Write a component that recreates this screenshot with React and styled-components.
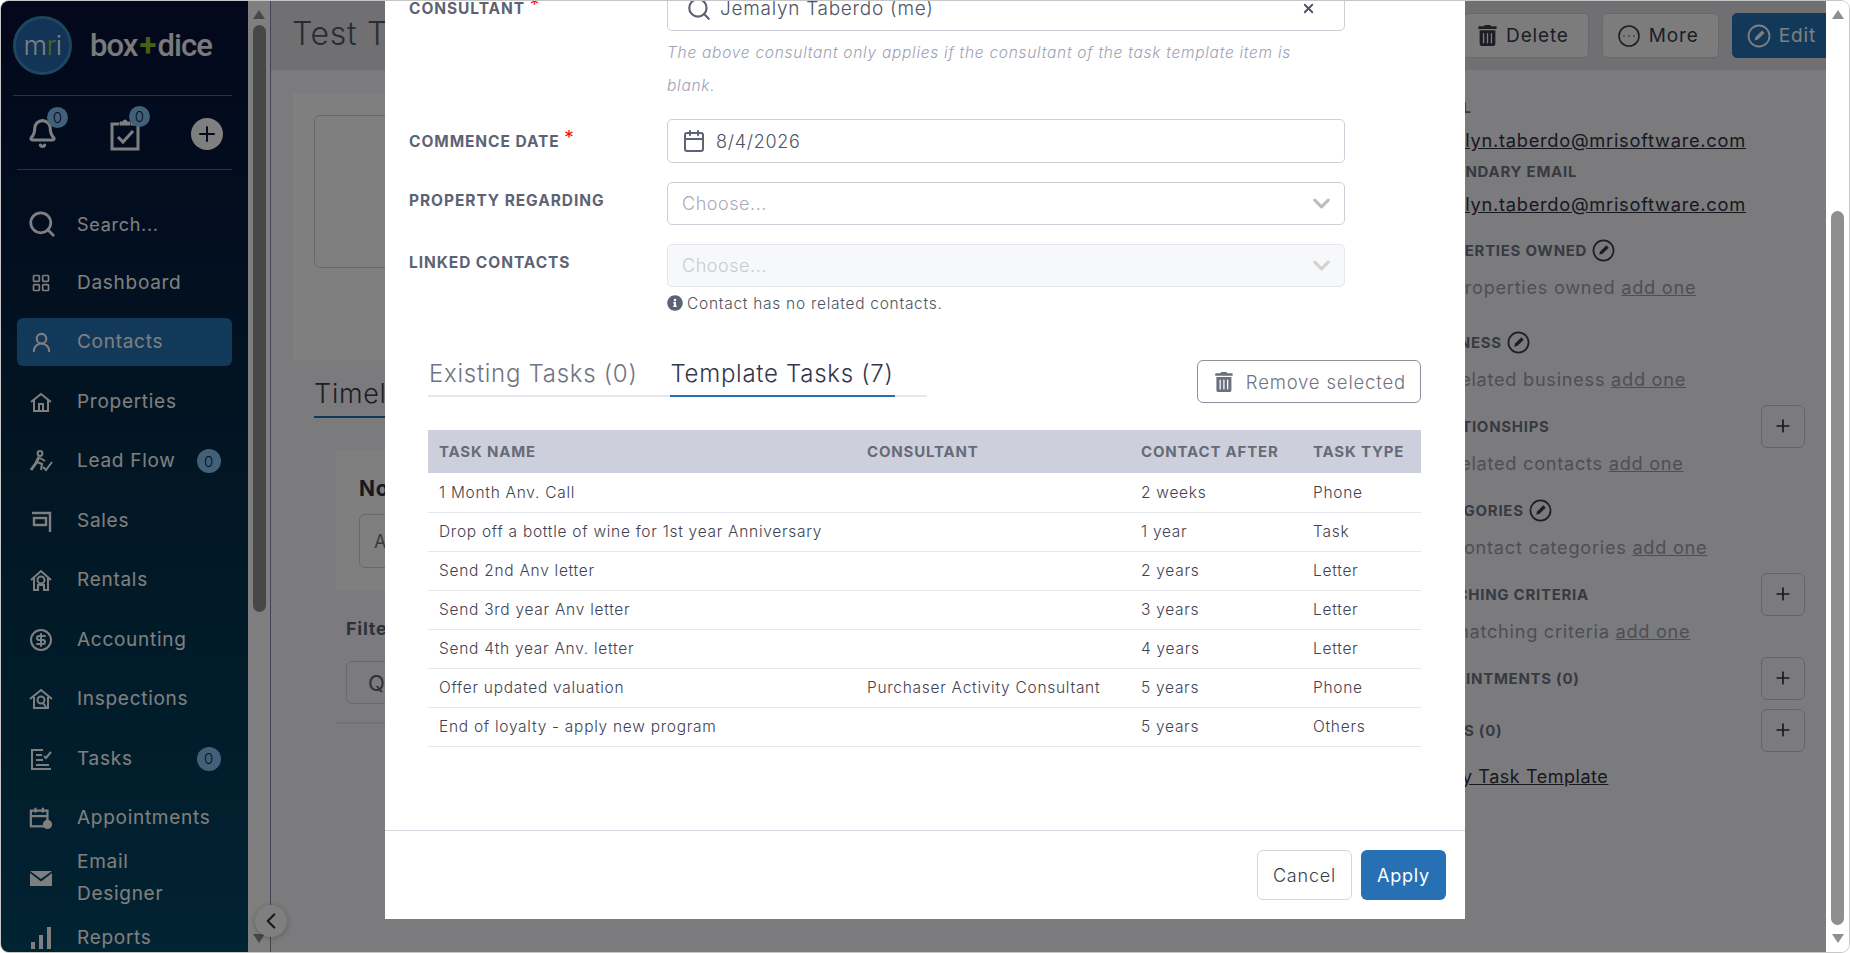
import React from 'react';
import styled, { createGlobalStyle } from 'styled-components';
import { Bell, CircleEllipsis, Search, LayoutGrid, UserRound, ChevronDown, ChevronLeft, Plus, X, Calendar, CircleDollarSign } from 'lucide-react';
import { FaTrashAlt, FaInfoCircle } from 'react-icons/fa';

const GlobalStyle = createGlobalStyle`
  html, body { margin: 0; padding: 0; background: #fff; height: 100%; overflow: hidden; }
  * { box-sizing: border-box; }
  body { font-family: Inter, "Open Sans", sans-serif; letter-spacing: 0.045em; }
`;

const ClipboardIcon = () => (
  <svg width="32" height="34" viewBox="0 0 32 34" fill="none" stroke="currentColor" strokeWidth="3">
    <path d="M10 7H3v25h26V7h-7" /><path d="M11 8V5h3a2 2 0 0 1 4 0h3v3z" fill="currentColor" strokeWidth="1" /><path d="m9 20 5 5 10-11" />
  </svg>
);
const HomeIcon = () => (
  <svg width="24" height="24" viewBox="0 0 24 24" fill="none" stroke="currentColor" strokeWidth="2">
    <path d="M2 12 12 4l10 8" /><path d="M5 10v11h14V10" /><path d="M10 21v-7h4v7" />
  </svg>
);
const RunnerIcon = () => (
  <svg width="24" height="24" viewBox="0 0 24 24" fill="none" stroke="currentColor" strokeWidth="2">
    <circle cx="11" cy="4.500" r="2.400" /><path d="M10 8 7 14l-5 7" strokeWidth="3" /><path d="M8 13l5 2-1 6" /><path d="M11 9l5 3" /><path d="m14 18 3 3 6-8" />
  </svg>
);
const SignIcon = () => (
  <svg width="24" height="24" viewBox="0 0 24 24" fill="none" stroke="currentColor" strokeWidth="2.400">
    <path d="M3 4h18v19" /><rect x="5" y="9" width="12" height="7" />
  </svg>
);
const RentalIcon = () => (
  <svg width="24" height="24" viewBox="0 0 24 24" fill="none" stroke="currentColor" strokeWidth="2">
    <path d="M2 12 12 3l10 9" /><path d="M5 10v12h4v-5h6v5h4V10" /><circle cx="12" cy="12" r="3.500" />
  </svg>
);
const InspectIcon = () => (
  <svg width="24" height="24" viewBox="0 0 24 24" fill="none" stroke="currentColor" strokeWidth="2">
    <path d="M1 12 12 3l11 9" /><path d="M5 10v11h14V10" /><circle cx="12" cy="13" r="3.500" /><path d="m14 16 3 4" />
  </svg>
);
const TasksIcon = () => (
  <svg width="24" height="24" viewBox="0 0 24 24" fill="none" stroke="currentColor" strokeWidth="2">
    <path d="M22 22H3V3h11" /><path d="M7 8h6M7 13h7M7 18h13" /><path d="m15 9 2 2 5-6" />
  </svg>
);
const ApptIcon = () => (
  <svg width="24" height="24" viewBox="0 0 26 26" fill="none" stroke="currentColor" strokeWidth="2.400">
    <rect x="2" y="5" width="18" height="17" /><path d="M2 11h18M7 2v5M15 2v5" /><circle cx="20" cy="20" r="5" fill="currentColor" stroke="none" />
  </svg>
);
const MailIcon = () => (
  <svg width="24" height="24" viewBox="0 0 24 24">
    <path d="M1 5h22L12 13z" fill="currentColor" /><path d="M1 7v13h22V7L12 15.500z" fill="currentColor" />
  </svg>
);
const BarsIcon = () => (
  <svg width="24" height="24" viewBox="0 0 24 24" fill="currentColor">
    <rect x="2" y="16" width="4" height="7" /><rect x="10" y="9" width="4" height="14" /><rect x="18" y="1" width="4" height="22" />
  </svg>
);
const EditIcon = ({ size = 24 }) => (
  <svg width={size} height={size} viewBox="0 0 24 24" fill="none" stroke="currentColor" strokeWidth="1.800">
    <circle cx="12" cy="12" r="10.500" /><path d="M7.500 16.500 8.500 13 15 6.500 17.500 9 11 15.500z" fill="currentColor" stroke="none" />
  </svg>
);

const navItems = [
  { label: 'Dashboard', icon: <LayoutGrid size={20} strokeWidth={2} /> },
  { label: 'Contacts', icon: <UserRound size={23} strokeWidth={2.2} />, active: true },
  { label: 'Properties', icon: <HomeIcon /> },
  { label: 'Lead Flow', icon: <RunnerIcon />, badge: '0' },
  { label: 'Sales', icon: <SignIcon /> },
  { label: 'Rentals', icon: <RentalIcon /> },
  { label: 'Accounting', icon: <CircleDollarSign size={24} strokeWidth={2} /> },
  { label: 'Inspections', icon: <InspectIcon /> },
  { label: 'Tasks', icon: <TasksIcon />, badge: '0' },
  { label: 'Appointments', icon: <ApptIcon /> },
  { label: 'Email Designer', icon: <MailIcon />, wrap: true },
  { label: 'Reports', icon: <BarsIcon /> },
];

const tasks = [
  ['1 Month Anv. Call', '', '2 weeks', 'Phone'],
  ['Drop off a bottle of wine for 1st year Anniversary', '', '1 year', 'Task'],
  ['Send 2nd Anv letter', '', '2 years', 'Letter'],
  ['Send 3rd year Anv letter', '', '3 years', 'Letter'],
  ['Send 4th year Anv. letter', '', '4 years', 'Letter'],
  ['Offer updated valuation', 'Purchaser Activity Consultant', '5 years', 'Phone'],
  ['End of loyalty - apply new program', '', '5 years', 'Others'],
];

const sections = [
  { title: 'PROPERTIES OWNED', edit: true, text: 'No properties owned', gap: 4 },
  { title: 'BUSINESS', edit: true, text: 'No related business', gap: 16 },
  { title: 'RELATIONSHIPS', plus: true, text: 'No related contacts', gap: 8 },
  { title: 'CATEGORIES', edit: true, text: 'No contact categories', gap: 8 },
  { title: 'MATCHING CRITERIA', plus: true, text: 'No matching criteria', gap: 8 },
  { title: 'APPOINTMENTS (0)', plus: true, gap: 8 },
  { title: 'TASKS (0)', plus: true, gap: 8 },
];

const App = () => (
  <>
    <GlobalStyle />
    <Frame>
      <Sidebar>
        <LogoRow>
          <LogoBadge>m<LogoGreen>r</LogoGreen>i</LogoBadge>
          <LogoText>box<LogoPlus>+</LogoPlus>dice</LogoText>
        </LogoRow>
        <QuickRow>
          <QuickIcon>
            <Bell size={31} strokeWidth={2.4} />
            <TopBadge>0</TopBadge>
          </QuickIcon>
          <QuickIcon>
            <ClipboardIcon />
            <TopBadge>0</TopBadge>
          </QuickIcon>
          <AddCircle><Plus size={24} strokeWidth={2} /></AddCircle>
        </QuickRow>
        <SearchRow>
          <Search size={30} strokeWidth={2.2} />
          <span>Search...</span>
        </SearchRow>
        {navItems.map((item) => (
          <NavItem key={item.label} $active={item.active} $wrap={item.wrap}>
            <NavIcon>{item.icon}</NavIcon>
            <NavLabel $wrap={item.wrap}>{item.label}</NavLabel>
            {item.badge && <NavBadge>{item.badge}</NavBadge>}
          </NavItem>
        ))}
      </Sidebar>

      <PageScroll>
        <ScrollUp />
        <ScrollThumb $top={6} $height={587} />
        <ScrollDown />
      </PageScroll>

      <Main>
        <TopBar>
          <PageTitle>Test Test</PageTitle>
          <TopActions>
            <TopButton><FaTrashAlt size={21} /> Delete</TopButton>
            <TopButton><CircleEllipsis size={24} strokeWidth={1.6} /> More</TopButton>
            <TopButton $primary><EditIcon /> Edit</TopButton>
          </TopActions>
        </TopBar>
        <Columns>
          <LeftColumn>
            <ProfileCard><ProfileBox /></ProfileCard>
            <TimelineTab>Timeline</TimelineTab>
            <NotePanel>
              <NoteTitle>Notes</NoteTitle>
              <NoteInput>Add a note</NoteInput>
            </NotePanel>
            <FilterTitle>Filter</FilterTitle>
            <FilterInput>Q</FilterInput>
            <FilterRule />
          </LeftColumn>
          <RightColumn>
            <EmailLabel>EMAIL</EmailLabel>
            <EmailValue>jemalyn.taberdo@mrisoftware.com</EmailValue>
            <EmailLabel>SECONDARY EMAIL</EmailLabel>
            <EmailValue>jemalyn.taberdo@mrisoftware.com</EmailValue>
            {sections.map((s) => (
              <Section key={s.title} $gap={s.gap}>
                <SectionHead>
                  <SectionTitle>
                    {s.title}
                    {s.edit && <EditIcon size={23} />}
                  </SectionTitle>
                  {s.plus && <PlusButton><Plus size={20} strokeWidth={2} /></PlusButton>}
                </SectionHead>
                {s.text && <SectionText>{s.text} <u>add one</u></SectionText>}
              </Section>
            ))}
            <TemplateLink>Apply Task Template</TemplateLink>
          </RightColumn>
        </Columns>
      </Main>

      <WindowScroll>
        <ScrollUp />
        <ScrollThumb $top={192} $height={714} />
        <ScrollDown />
      </WindowScroll>

      <CollapseButton><ChevronLeft size={26} strokeWidth={2} /></CollapseButton>
      <Backdrop />

      <Modal>
        <ModalBody>
          <FieldRow>
            <FieldLabel $tall>CONSULTANT <Required>*</Required></FieldLabel>
            <FieldInput $height={45} $pl={18} $pr={28}>
              <Search size={26} strokeWidth={2} color="#5d6374" />
              <InputText $indent>Jemalyn Taberdo (me)</InputText>
              <X size={15} strokeWidth={3} color="#4f5364" />
            </FieldInput>
          </FieldRow>
          <HelpText>The above consultant only applies if the consultant of the task template item is blank.</HelpText>
          <FieldRow $mt={17}>
            <FieldLabel $tall>COMMENCE DATE <Required>*</Required></FieldLabel>
            <FieldInput $height={44}>
              <Calendar size={24} strokeWidth={2} color="#5d6374" />
              <InputText>8/4/2026</InputText>
            </FieldInput>
          </FieldRow>
          <FieldRow $mt={19}>
            <FieldLabel>PROPERTY REGARDING</FieldLabel>
            <FieldInput $height={43} $pr={9}>
              <Placeholder>Choose...</Placeholder>
              <ChevronDown size={27} strokeWidth={2.8} color="#bdbdbd" />
            </FieldInput>
          </FieldRow>
          <FieldRow $mt={19}>
            <FieldLabel>LINKED CONTACTS</FieldLabel>
            <FieldInput $height={43} $pr={9} $disabled>
              <Placeholder $disabled>Choose...</Placeholder>
              <ChevronDown size={27} strokeWidth={2.8} color="#d2d2d2" />
            </FieldInput>
          </FieldRow>
          <NoteRow>
            <span />
            <NoteLine><FaInfoCircle size={16} color="#5d6374" /> Contact has no related contacts.</NoteLine>
          </NoteRow>

          <TabsSection>
            <TabsRow>
              <Tabs>
                <Tab>Existing Tasks (0)</Tab>
                <Tab $active>Template Tasks (7)</Tab>
              </Tabs>
              <RemoveButton><FaTrashAlt size={20} color="#6b707c" /> Remove selected</RemoveButton>
            </TabsRow>
            <TaskTable>
              <colgroup>
                <col style={{ width: 428 }} />
                <col style={{ width: 274 }} />
                <col style={{ width: 172 }} />
                <col style={{ width: 119 }} />
              </colgroup>
              <thead>
                <tr>
                  <th>TASK NAME</th>
                  <th>CONSULTANT</th>
                  <th>CONTACT AFTER</th>
                  <th>TASK TYPE</th>
                </tr>
              </thead>
              <tbody>
                {tasks.map((row) => (
                  <tr key={row[0]}>
                    {row.map((cell, i) => <td key={i}>{cell}</td>)}
                  </tr>
                ))}
              </tbody>
            </TaskTable>
          </TabsSection>
        </ModalBody>
        <ModalFooter>
          <CancelButton>Cancel</CancelButton>
          <ApplyButton>Apply</ApplyButton>
        </ModalFooter>
      </Modal>
    </Frame>
  </>
);

const Frame = styled.div`
  position: relative;
  display: flex;
  width: 1850px;
  height: 953px;
  border: 1px solid #c6c6c6;
  border-radius: 9px;
  overflow: hidden;
  background: #fff;
`;

const Sidebar = styled.aside`
  flex: 0 0 247px;
  height: 100%;
  overflow: hidden;
  padding: 0 16px;
  color: #fff;
  background: linear-gradient(180deg, #060f36 0%, #042c48 50%, #024664 100%);
`;

const LogoRow = styled.div`
  display: flex;
  align-items: center;
  gap: 18px;
  height: 95px;
  padding: 0 0 6px 0;
  margin: 0 0 0 -4px;
  border-bottom: 1px solid #2470b5;
`;

const LogoBadge = styled.div`
  flex: 0 0 59px;
  height: 59px;
  display: flex;
  align-items: center;
  justify-content: center;
  border-radius: 50%;
  border: 3px solid #3c8cbb;
  background: #2468ad;
  font-size: 27px;
  font-weight: 300;
  letter-spacing: -0.02em;
`;

const LogoGreen = styled.span`
  color: #9ccb3b;
`;

const LogoText = styled.div`
  font-family: Roboto, sans-serif;
  font-size: 31px;
  font-weight: 500;
  letter-spacing: -0.03em;
  color: #f4f4f4;
`;

const LogoPlus = styled.span`
  margin: 0 2px;
  font-weight: 700;
  color: #8cc21f;
`;

const QuickRow = styled.div`
  display: flex;
  align-items: center;
  justify-content: space-between;
  height: 74px;
  padding: 2px 9px 0 10px;
  border-bottom: 1px solid #2470b5;
`;

const QuickIcon = styled.div`
  position: relative;
  display: flex;
  width: 32px;
`;

const TopBadge = styled.span`
  position: absolute;
  top: -11px;
  right: -9px;
  width: 21px;
  height: 21px;
  display: flex;
  align-items: center;
  justify-content: center;
  border-radius: 50%;
  background: #85c0f0;
  color: #0a1a33;
  font-size: 15px;
  font-weight: 300;
  letter-spacing: 0;
`;

const AddCircle = styled.div`
  width: 32px;
  height: 32px;
  display: flex;
  align-items: center;
  justify-content: center;
  border-radius: 50%;
  background: #fff;
  color: #071434;
`;

const SearchRow = styled.div`
  display: flex;
  align-items: center;
  gap: 20px;
  height: 46px;
  margin-top: 31px;
  padding-left: 10px;
  font-size: 18px;
`;

const NavItem = styled.div`
  display: flex;
  align-items: center;
  height: ${({ $wrap }) => ($wrap ? '49px' : '48px')};
  margin: 11.500px 0;
  padding: 0 0 0 12px;
  border-radius: 6px;
  background: ${({ $active }) => ($active ? '#2470b5' : 'transparent')};
  font-size: 19px;
`;

const NavIcon = styled.span`
  flex: 0 0 24px;
  display: flex;
  align-items: center;
  justify-content: center;
  margin-right: 24px;
`;

const NavLabel = styled.span`
  flex: 1;
  line-height: 32px;
  ${({ $wrap }) => ($wrap ? 'width: 100px; flex: 0 0 100px;' : '')}
`;

const NavBadge = styled.span`
  flex: 0 0 24px;
  height: 24px;
  margin-right: 11px;
  display: flex;
  align-items: center;
  justify-content: center;
  border-radius: 50%;
  background: #85c0f0;
  color: #0a1a33;
  font-size: 15px;
  font-weight: 300;
`;

const PageScroll = styled.div`
  flex: 0 0 22px;
  height: 100%;
  display: flex;
  flex-direction: column;
  align-items: center;
  background: #fff;
`;

const WindowScroll = styled(PageScroll)`
  flex: 0 0 23px;
`;

const ScrollUp = styled.span`
  flex: none;
  margin-top: 9px;
  width: 0;
  height: 0;
  border-left: 6px solid transparent;
  border-right: 6px solid transparent;
  border-bottom: 9px solid #8f8f8f;
`;

const ScrollDown = styled.span`
  flex: none;
  margin-top: auto;
  margin-bottom: 9px;
  width: 0;
  height: 0;
  border-left: 6px solid transparent;
  border-right: 6px solid transparent;
  border-top: 9px solid #8f8f8f;
`;

const ScrollThumb = styled.span`
  flex: none;
  width: 13px;
  margin-top: ${({ $top }) => $top}px;
  height: ${({ $height }) => $height}px;
  border-radius: 7px;
  background: #8f8f8f;
`;

const Main = styled.main`
  flex: 0 0 1556px;
  height: 100%;
  overflow: hidden;
  border-left: 1px solid #7f8ba8;
  background: #f6f7fa;
`;

const TopBar = styled.header`
  display: flex;
  align-items: center;
  justify-content: space-between;
  height: 69px;
  padding: 0 0 0 21px;
  background: #e0e1e5;
`;

const PageTitle = styled.h1`
  margin: 0 0 4px;
  font-size: 32px;
  font-weight: 300;
  color: #55586a;
`;

const TopActions = styled.div`
  display: flex;
  align-items: center;
  gap: 13px;
  margin-right: -10px;
`;

const TopButton = styled.button`
  display: flex;
  align-items: center;
  gap: 8px;
  height: 45px;
  padding: 0 19px 0 14px;
  border: 1px solid ${({ $primary }) => ($primary ? '#2470b5' : '#ccd0d8')};
  border-radius: 5px;
  background: ${({ $primary }) => ($primary ? '#2470b5' : '#f8f9fb')};
  color: ${({ $primary }) => ($primary ? '#fff' : '#3a3d4a')};
  font: inherit;
  font-size: 19px;
  letter-spacing: 0.045em;
`;

const Columns = styled.div`
  display: flex;
`;

const LeftColumn = styled.div`
  flex: 1;
  min-width: 0;
`;

const ProfileCard = styled.div`
  margin: 23px 0 0 22px;
  height: 267px;
  padding: 22px 21px;
  background: #fff;
`;

const ProfileBox = styled.div`
  width: 700px;
  height: 153px;
  border: 1px solid #cfd2da;
  border-radius: 6px;
`;

const TimelineTab = styled.div`
  display: inline-block;
  margin: 18px 0 0 43px;
  height: 40px;
  width: 200px;
  border-bottom: 2px solid #2470b5;
  font-size: 27px;
  font-weight: 300;
  line-height: 32px;
  color: #3a3d4a;
`;

const NotePanel = styled.div`
  margin: 33px 0 0 65px;
  height: 139px;
  padding: 26px 23px 0;
  background: #fff;
`;

const NoteTitle = styled.div`
  font-size: 21px;
  font-weight: 700;
  line-height: 24px;
  color: #2f3140;
`;

const NoteInput = styled.div`
  width: 600px;
  height: 54px;
  margin-top: 13px;
  padding: 0 14px;
  display: flex;
  align-items: center;
  border: 1px solid #cfd2da;
  border-radius: 6px;
  font-size: 18px;
  color: #6f7482;
`;

const FilterTitle = styled.div`
  margin: 28px 0 0 75px;
  font-size: 18px;
  font-weight: 700;
  line-height: 22px;
  color: #5d6374;
`;

const FilterInput = styled.div`
  width: 600px;
  height: 43px;
  margin: 21px 0 0 75px;
  padding: 0 21px;
  display: flex;
  align-items: center;
  border: 1px solid #cfd2da;
  border-radius: 6px;
  font-size: 22px;
  color: #5d6374;
`;

const FilterRule = styled.div`
  height: 2px;
  margin: 18px 0 0 65px;
  background: #e6e8ee;
`;

const RightColumn = styled.div`
  flex: 0 0 405px;
  padding: 26px 21px 0 0;
  color: #3a3d4a;
`;

const EmailLabel = styled.div`
  height: 24px;
  font-size: 15px;
  font-weight: 700;
  line-height: 24px;
  color: #6f7482;
`;

const EmailValue = styled.div`
  height: 40px;
  font-size: 18.300px;
  line-height: 40px;
  text-decoration: underline;
  color: #2f3140;
`;

const Section = styled.section`
  margin-top: ${({ $gap }) => $gap}px;
`;

const SectionHead = styled.div`
  display: flex;
  align-items: center;
  justify-content: space-between;
  height: 44px;
`;

const SectionTitle = styled.div`
  display: flex;
  align-items: center;
  gap: 5px;
  font-size: 15px;
  font-weight: 700;
  color: #6f7482;

  svg {
    color: #3a3d4a;
  }
`;

const PlusButton = styled.div`
  width: 44px;
  height: 43px;
  display: flex;
  align-items: center;
  justify-content: center;
  border: 1px solid #c6c9d1;
  border-radius: 6px;
  color: #2f3140;
`;

const SectionText = styled.div`
  height: 32px;
  font-size: 18.200px;
  line-height: 30px;
  color: #9b9eab;
`;

const TemplateLink = styled.div`
  margin-top: 8px;
  font-size: 18px;
  letter-spacing: 0.03em;
  line-height: 34px;
  text-decoration: underline;
  color: #2f3140;
`;

const CollapseButton = styled.div`
  position: absolute;
  left: 254px;
  top: 904px;
  width: 32px;
  height: 32px;
  display: flex;
  align-items: center;
  justify-content: center;
  border-radius: 50%;
  background: #fff;
  color: #2f3140;
  box-shadow: 0 1px 6px rgba(0, 0, 0, 0.25);
`;

const Backdrop = styled.div`
  position: absolute;
  left: 0;
  top: 0;
  bottom: 0;
  width: 1825px;
  background: rgba(0, 0, 0, 0.5);
`;

const Modal = styled.div`
  position: absolute;
  left: 384px;
  top: -15px;
  width: 1080px;
  height: 933px;
  display: flex;
  flex-direction: column;
  background: #fff;
`;

const ModalBody = styled.div`
  flex: 1;
  padding: 0 0 0 24px;
`;

const FieldRow = styled.div`
  display: grid;
  grid-template-columns: 258px 678px;
  align-items: start;
  margin-top: ${({ $mt }) => $mt || 0}px;
`;

const FieldLabel = styled.div`
  font-size: 15.500px;
  font-weight: 700;
  letter-spacing: 0.06em;
  line-height: ${({ $tall }) => ($tall ? '43px' : '38px')};
  color: #5d6374;
`;

const Required = styled.span`
  position: relative;
  top: -3px;
  font-size: 19px;
  font-weight: 400;
  color: #f40b0b;
`;

const FieldInput = styled.div`
  display: flex;
  align-items: center;
  height: ${({ $height }) => $height}px;
  padding: 0 ${({ $pr }) => $pr ?? 17}px 0 ${({ $pl }) => $pl ?? 14}px;
  border: 1px solid ${({ $disabled }) => ($disabled ? '#e4e6ec' : '#ccced8')};
  border-radius: 5px;
  background: ${({ $disabled }) => ($disabled ? '#f7f8fa' : '#fff')};
`;

const InputText = styled.span`
  flex: 1;
  margin-left: ${({ $indent }) => ($indent ? '8px' : '10px')};
  font-size: ${({ $indent }) => ($indent ? '19px' : '18px')};
  font-weight: 300;
  color: #4f5364;
`;

const Placeholder = styled.span`
  flex: 1;
  font-size: 18px;
  font-weight: 300;
  letter-spacing: 0.03em;
  color: ${({ $disabled }) => ($disabled ? '#c9cbd1' : '#a9acb6')};
`;

const HelpText = styled.div`
  width: 640px;
  margin: 5px 0 0 258px;
  font-size: 15.500px;
  font-style: italic;
  font-weight: 300;
  line-height: 33px;
  color: #9ea2b3;
`;

const NoteRow = styled.div`
  display: grid;
  grid-template-columns: 258px 678px;
  height: 32px;
`;

const NoteLine = styled.div`
  display: flex;
  align-items: center;
  gap: 4px;
  font-size: 15.500px;
  font-weight: 300;
  color: #4f5364;
`;

const TabsSection = styled.div`
  margin: 41px 44px 0 19px;
`;

const TabsRow = styled.div`
  display: flex;
  align-items: flex-start;
  justify-content: space-between;
  height: 43px;
  margin-bottom: 27px;
`;

const Tabs = styled.div`
  display: flex;
  gap: 31px;
  width: 499px;
  height: 37px;
  border-bottom: 2px solid #e6e8ee;
`;

const Tab = styled.div`
  height: 37px;
  padding: 0 1px;
  border-bottom: 2px solid ${({ $active }) => ($active ? '#2670b3' : 'transparent')};
  font-size: 24px;
  font-weight: 300;
  line-height: 28px;
  white-space: nowrap;
  color: ${({ $active }) => ($active ? '#34374a' : '#6f7482')};
`;

const RemoveButton = styled.button`
  display: flex;
  align-items: center;
  gap: 12px;
  width: 224px;
  height: 43px;
  padding: 0 14px 0 16px;
  border: 1px solid #8d919c;
  border-radius: 6px;
  background: #fff;
  font: inherit;
  font-size: 18.500px;
  font-weight: 300;
  letter-spacing: 0.045em;
  white-space: nowrap;
  color: #6f7482;
`;

const TaskTable = styled.table`
  width: 993px;
  table-layout: fixed;
  border-collapse: collapse;

  th {
    height: 43px;
    padding: 0 11px;
    background: #cdd0dc;
    text-align: left;
    font-size: 15px;
    font-weight: 700;
    letter-spacing: 0.055em;
    color: #666b78;
    white-space: nowrap;
  }

  td {
    height: 39px;
    padding: 0 11px;
    border-bottom: 1px solid #e6e8ee;
    font-size: 15.500px;
    font-weight: 300;
    color: #3f4252;
    white-space: nowrap;
  }
`;

const ModalFooter = styled.footer`
  display: flex;
  align-items: flex-start;
  justify-content: flex-end;
  gap: 9px;
  height: 89px;
  padding: 19px 19px 0 0;
  border-top: 1px solid #d5d6e0;
`;

const CancelButton = styled.button`
  width: 95px;
  height: 50px;
  border: 1px solid #d3d5dc;
  border-radius: 6px;
  background: #fff;
  font: inherit;
  font-size: 18px;
  font-weight: 300;
  letter-spacing: 0.045em;
  color: #3a3d4a;
`;

const ApplyButton = styled.button`
  width: 85px;
  height: 50px;
  border: none;
  border-radius: 6px;
  background: #2670b3;
  font: inherit;
  font-size: 18px;
  letter-spacing: 0.045em;
  color: #fff;
`;

export default App;
